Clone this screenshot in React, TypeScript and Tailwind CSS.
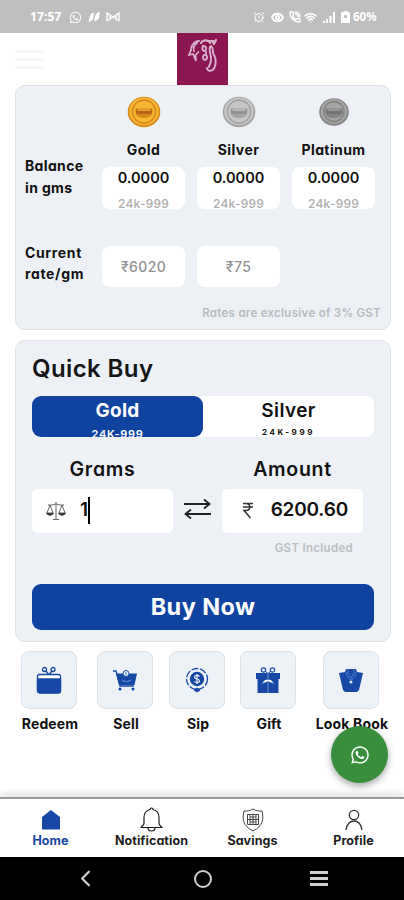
import { AlarmClock, ChevronLeft, Eye, PhoneCall, Wifi } from "lucide-react"
import { FaWhatsapp } from "react-icons/fa"
import type { ReactNode } from "react"

interface Metal {
  name: string
  balance: string
  rate?: string
  rim: string
  face: string
  mid: string
}

const metals: Metal[] = [
  { name: "Gold", balance: "0.0000", rate: "₹6020", rim: "#d98a1c", face: "#f7b733", mid: "#b8641a" },
  { name: "Silver", balance: "0.0000", rate: "₹75", rim: "#a3a3a3", face: "#c6c6c6", mid: "#929292" },
  { name: "Platinum", balance: "0.0000", rim: "#858585", face: "#a5a5a5", mid: "#737373" },
]

function Coin({ metal }: { metal: Metal }) {
  const r = metal.name === "Platinum" ? 14 : 15.5
  return (
    <svg className="h-8 w-[34px]" viewBox="0 0 34 32">
      <ellipse cx="17" cy="16" rx={r + 0.8} ry={r - 0.3} fill={metal.rim} />
      <ellipse cx="17" cy="15.4" rx={r - 0.8} ry={r - 1.6} fill={metal.face} />
      <circle cx="17" cy="15.6" r={r - 4} fill={metal.face} stroke={metal.rim} strokeWidth="1.6" />
      <path d="M8.5 12.5h17v4.5c-1 4-4.500 5-8.500 5s-7.500-1-8.500-5z" fill={metal.rim} />
      <rect x="9" y="13" width="16" height="5" rx="1" fill={metal.mid} />
      <path d="M10.500 14h13" stroke={metal.face} strokeWidth="1.400" />
    </svg>
  )
}

function Logo() {
  return (
    <div className="flex h-[52px] w-[51px] items-start justify-center bg-[#8c1650]">
      <svg className="mt-[5px] h-[35px] w-[34px]" viewBox="0 0 34 35" fill="none" stroke="#d9b3cb" strokeLinecap="round">
        <path d="M14 3c-4 0-8 4-8 9M12 5c-3 2-4 5-3 8" strokeWidth="1.900" strokeDasharray="2.500 1.600" />
        <path d="M6 12l-2 5 4-1 3 7-.5-6 3-3" strokeWidth="1.700" />
        <path d="M16 5c2-4 8-3 9 0M27 3l2 3M31 2l-2 4M23 3h7" strokeWidth="2.200" strokeDasharray="2 1.500" />
        <path d="M26 8c3 3 1 6 3 9 2 4 2 8 1 11-1 6-8 6-8 2M25 9c-1 5 1 7 1 12s-2 6-2 8" strokeWidth="2" strokeDasharray="3 1.400" />
        <path d="M18 8c4 0 4 4 1 5-2-1-2-3-1-5M19 17c4-1 4 4 1 5-2 0-3-3-1-5M21 14v2" strokeWidth="1.800" />
      </svg>
    </div>
  )
}

function StatusBar() {
  return (
    <div className="flex h-[33px] items-center bg-[#bfbfbf] pl-[30px] pt-px text-white">
      <span className="w-[39px] font-['Noto_Sans',sans-serif] text-xs font-bold tracking-[0.1px]">17:57</span>
      <FaWhatsapp size={13} />
      <svg className="ml-1.5 h-3 w-3" viewBox="0 0 12 12" fill="currentColor">
        <path d="M.5 11 2 5c1-3 3-4 4-3L5 8c-1 2-3 3-4.500 3zM6 10l1.500-6c1-2 3-3 4.500-3l-1 6c-1 2-3 3-5 3z" />
      </svg>
      <svg className="ml-1.5 h-3 w-3.5" viewBox="0 0 14 12" fill="none" stroke="currentColor" strokeWidth="1.300">
        <path d="M1 10V2l6 4 6-4v8M1 10l6-4 6 4M4 4v4M10 4v4" />
      </svg>
      <div className="ml-[133px] flex items-center">
        <AlarmClock size={12} />
        <Eye className="ml-[6px]" size={13} strokeWidth={3.6} />
        <PhoneCall className="ml-[5px]" size={12} strokeWidth={2.8} />
        <Wifi className="ml-[3px]" size={13} strokeWidth={3} />
        <svg className="ml-[5px] h-3 w-3.5" viewBox="0 0 14 12" fill="currentColor">
          <path d="M1 10h2v2H1zM4 8h2v4H4zM7.500 5h2v7h-2zM11 1h2v11h-2z" />
        </svg>
        <svg className="ml-[5px] h-3 w-[9px]" viewBox="0 0 9 14" preserveAspectRatio="none">
          <path d="M2.500 0h4v1.500H9V14H0V1.500h2.500z" fill="currentColor" />
          <path d="M3 5h3v3H3z" fill="#bfbfbf" />
        </svg>
      </div>
      <span className="ml-[3px] font-['Noto_Sans',sans-serif] text-[11.500px] font-bold">60%</span>
    </div>
  )
}

function BalanceCard() {
  return (
    <section className="h-[245px] w-[376px] rounded-[10px] border border-[#dfe2e5] bg-[#edf1f6] pl-[9px] pt-2.5">
      <div className="flex">
        <div className="w-[77px] pt-[59px] text-sm font-bold leading-[22px] tracking-[0.35px]">
          Balance
          <br />
          in gms
        </div>
        <div className="flex gap-3">
          {metals.map((m) => (
            <div key={m.name} className="flex w-[83px] flex-col items-center">
              <Coin metal={m} />
              <div className="mt-3 h-5 whitespace-nowrap text-sm font-bold leading-5 tracking-[0.4px]">{m.name}</div>
              <div className="mt-[7px] h-[42px] w-full rounded-lg bg-white text-center">
                <div className="text-[14.500px] font-semibold leading-[22px]">{m.balance}</div>
                <div className="mt-[5px] h-[15px] text-xs font-medium leading-[19px] tracking-[0.2px] text-[#aeaeae]">
                  24k-999
                </div>
              </div>
            </div>
          ))}
        </div>
      </div>
      <div className="mt-[33px] flex">
        <div className="w-[77px] whitespace-nowrap text-sm font-bold leading-[21px] tracking-[0.65px]">
          Current
          <br />
          rate/gm
        </div>
        <div className="flex gap-3 pt-1">
          {metals
            .filter((m) => m.rate)
            .map((m) => (
              <div
                key={m.name}
                className="flex h-[41px] w-[83px] items-center justify-center rounded-lg bg-white text-sm font-medium tracking-[0.4px] text-[#929292]"
              >
                {m.rate}
              </div>
            ))}
        </div>
      </div>
      <p className="mt-4 pr-[9px] text-right text-[11.500px] font-semibold leading-5 tracking-[0.280px] text-[#b9bbbe]">
        Rates are exclusive of 3% GST
      </p>
    </section>
  )
}

function ScaleIcon() {
  return (
    <svg className="h-5 w-5" viewBox="0 0 20 20" fill="none" stroke="#555" strokeWidth="0.900">
      <path d="M10 1v17M7 18.500h6M2 4h4l4-1 4 1h4M4 4 1 12M4 4l3 8M16 4l-3 8M16 4l3 8" />
      <path d="M0.500 12h7c-.5 3-6.500 3-7 0zM12.500 12h7c-.5 3-6.500 3-7 0z" fill="#222" />
    </svg>
  )
}

function QuickBuy() {
  return (
    <section className="mt-2.5 h-[302px] w-[376px] rounded-[10px] border border-[#dfe2e5] bg-[#edf1f6] px-4 pt-3">
      <h2 className="h-8 text-[24px] font-semibold leading-8 tracking-[0.4px] text-[#161616]">Quick Buy</h2>
      <div className="mt-[11px] flex h-[41px] w-[342px] rounded-lg bg-white text-center">
        <div className="w-[171px] overflow-hidden rounded-[9px] bg-[#10439f] text-white">
          <div className="text-[19px] font-bold leading-[29px] tracking-[0.3px]">Gold</div>
          <div className="mt-px text-[11px] font-semibold leading-4 tracking-[0.700px]">24K-999</div>
        </div>
        <div className="w-[171px]">
          <div className="text-[19px] font-semibold leading-[29px] tracking-[0.4px]">Silver</div>
          <div className="text-[8px] font-bold leading-[14px] tracking-[2.600px]">24K-999</div>
        </div>
      </div>
      <div className="mt-[18px] flex text-center text-[19.500px] font-semibold leading-7">
        <div className="w-[141px] tracking-[0.700px]">Grams</div>
        <div className="ml-[49px] w-[141px] tracking-[0.700px]">Amount</div>
      </div>
      <div className="mt-[6px] flex items-center">
        <div className="flex h-[44px] w-[141px] items-center rounded-md bg-white pb-px pl-[14px]">
          <ScaleIcon />
          <span className="ml-[14px] text-[19px] font-semibold">1</span>
          <span className="h-[27px] w-[1.500px] bg-black" />
        </div>
        <svg className="mx-[11px] -mt-[5px] h-6 w-[27px]" viewBox="0 0 27 24" fill="none" stroke="#222" strokeWidth="1.800">
          <path d="M0 7h25M20 2.500l5.500 4.500-5.500 4.500" />
          <path d="M27 17H2M7 12.500L1.500 17 7 21.500" />
        </svg>
        <div className="flex h-[44px] w-[141px] items-center rounded-md bg-white pb-px pl-5 pr-[15px]">
          <svg className="h-[17px] w-3" viewBox="0 0 12 17" fill="none" stroke="#333" strokeWidth="1.500">
            <path d="M1 1.500h10M1 5h10M1 1.500h3c5 0 5 7 0 7H2l6.500 7.500" />
          </svg>
          <span className="ml-auto text-[19px] font-semibold tracking-[-0.200px]">6200.60</span>
        </div>
      </div>
      <p className="mt-[5px] pr-[10px] text-right text-[11.500px] font-semibold leading-5 tracking-[0.300px] text-[#bbbdc0]">
        <span className="pr-[11px]">GST Included</span>
      </p>
      <button className="mt-[26px] h-[46px] w-[342px] rounded-[9px] bg-[#10439f] text-[23.500px] font-bold tracking-[0.400px] text-white">
        Buy Now
      </button>
    </section>
  )
}

function RedeemIcon() {
  return (
    <svg className="h-7 w-[26px]" viewBox="0 0 26 28" fill="none" stroke="#1748a5" strokeWidth="1.300">
      <circle cx="8.500" cy="3.500" r="2" />
      <circle cx="17" cy="3.500" r="2" />
      <path d="M10 5l3 4 3-4M13 9l-3 1M13 9l3 1" />
      <rect x="1.500" y="8.500" width="23" height="18" rx="2" fill="#fff" />
      <path d="M1.500 13h23V25a2 2 0 0 1-2 2h-19a2 2 0 0 1-2-2z" fill="#1748a5" />
    </svg>
  )
}

function SellIcon() {
  return (
    <svg className="h-[22px] w-[26px]" viewBox="0 0 26 22" fill="#1748a5">
      <path d="M1 2h3l4 15h14" fill="none" stroke="#1748a5" strokeWidth="1.300" />
      <path d="M4 4.500h21L22.500 16H7z" />
      <circle cx="14" cy="4.500" r="3" fill="#eaf0f7" stroke="#1748a5" />
      <path d="M14 3v3M10 11c3 2 6 2 9 0" stroke="#5f8ad0" strokeWidth="1.200" fill="none" />
      <circle cx="8" cy="20" r="1.500" />
      <circle cx="21" cy="20" r="1.500" />
    </svg>
  )
}

function SipIcon() {
  return (
    <svg className="h-[26px] w-6" viewBox="0 0 24 26" fill="none" stroke="#1748a5">
      <circle cx="12" cy="12" r="10.500" strokeWidth="1.300" strokeDasharray="7 1.700" />
      <circle cx="12" cy="12" r="6.500" strokeWidth="1.400" fill="#1748a5" />
      <path d="M14.500 9.500c-2-2-5-1-5 .7 0 2.300 5 1.300 5 3.500s-3 2.300-5 .8M12 7v10" stroke="#eef3fa" strokeWidth="1.200" />
      <path d="M9 23l3-2 3 2-3 2z" fill="#1748a5" />
    </svg>
  )
}

function GiftIcon() {
  return (
    <svg className="h-[26px] w-6" viewBox="0 0 24 26" fill="#1748a5">
      <circle cx="7.500" cy="3" r="2.200" fill="none" stroke="#1748a5" strokeWidth="1.200" />
      <circle cx="16.500" cy="3" r="2.200" fill="none" stroke="#1748a5" strokeWidth="1.200" />
      <path d="M9 4l3 2.500L15 4" fill="none" stroke="#1748a5" />
      <path d="M0 6h24v6H0zM1.500 11.500h21V26h-21z" />
      <path d="M12 6v20" stroke="#7095cf" />
      <path d="M6 17c2-4 4-5 6-4 2-1 4 0 6 4-3-2-5-2-6-3-1 1-3 1-6 3z" fill="#fff" />
    </svg>
  )
}

function LookBookIcon() {
  return (
    <svg className="h-[23px] w-6" viewBox="0 0 24 23" fill="#1748a5">
      <path d="M7 0h10l1 3 6 1-4 17-2 2H6l-2-2L0 4l6-1z" />
      <path d="M7 3c0 4 2 6 5 8 3-2 5-4 5-8M9 0v4l3 5 3-5V0" fill="none" stroke="#5f8ad6" strokeWidth=".8" />
      <circle cx="12" cy="13" r="1.500" fill="#dce8f8" />
    </svg>
  )
}

function Action({ label, className, children }: { label: string; className: string; children: ReactNode }) {
  return (
    <div className={className}>
      <div className="flex h-[58px] w-[56px] items-center justify-center rounded-lg border border-[#dde1e6] bg-[#edf2f7]">
        {children}
      </div>
      <div className="mt-1 flex w-[58px] justify-center whitespace-nowrap text-sm font-bold leading-[22px] tracking-[0.150px]">
        {label}
      </div>
    </div>
  )
}

function NavItem({ label, active, children }: { label: string; active?: boolean; children: ReactNode }) {
  return (
    <div className={active ? "flex w-[101px] flex-col items-center text-[#17469f]" : "flex w-[101px] flex-col items-center text-[#1d1d1d]"}>
      <div className="flex h-[25px] items-center">{children}</div>
      <div className="text-[12.500px] font-bold leading-[18px] tracking-[0.080px]">{label}</div>
    </div>
  )
}

export default function App() {
  return (
    <div className="relative flex h-[900px] w-[404px] flex-col overflow-hidden bg-white font-['Inter',sans-serif] text-[#111] [font-feature-settings:'cv11']">
      <StatusBar />
      <header className="relative flex h-[52px] justify-center">
        <div className="absolute left-[15px] top-[17px] flex flex-col gap-[5px]">
          <span className="h-[3px] w-7 bg-[#f5f7f7]" />
          <span className="h-[3px] w-7 bg-[#f5f7f7]" />
          <span className="h-[3px] w-7 bg-[#f5f7f7]" />
        </div>
        <Logo />
      </header>

      <main className="h-[712px] pl-[15px]">
        <BalanceCard />
        <QuickBuy />
        <div className="mt-[9px] flex pl-[6px]">
          <Action label="Redeem" className="w-[76px]">
            <RedeemIcon />
          </Action>
          <Action label="Sell" className="w-[72px]">
            <SellIcon />
          </Action>
          <Action label="Sip" className="w-[71px]">
            <SipIcon />
          </Action>
          <Action label="Gift" className="w-[83px]">
            <GiftIcon />
          </Action>
          <Action label="Look Book" className="w-[56px]">
            <LookBookIcon />
          </Action>
        </div>
      </main>

      <button className="absolute left-[331px] top-[726px] flex h-[57px] w-[57px] items-center justify-center rounded-full bg-[#388e3c] text-white shadow-[0_3px_7px_rgba(0,0,0,0.35)]">
        <FaWhatsapp size={20} />
      </button>

      <div className="h-[2px] bg-[#9b9b9b] shadow-[0_-2px_6px_rgba(0,0,0,0.35)]" />
      <nav className="flex h-[58px] bg-white pt-2">
        <NavItem label="Home" active>
          <svg className="h-5 w-5" viewBox="0 0 20 20" fill="#1748a5">
            <path d="M10 0l9 7v12.500H1V7z" />
          </svg>
        </NavItem>
        <NavItem label="Notification">
          <svg className="h-[25px] w-[23px]" viewBox="0 0 23 25" fill="none" stroke="currentColor" strokeWidth="1.200">
            <path d="M10 2.500c0-2 3-2 3 0 4 1 6 4 6 8v6c0 2 3 3 3 4H1c0-1 3-2 3-4v-6c0-4 2-7 6-8zM8 21c0 4 7 4 7 0" />
          </svg>
        </NavItem>
        <NavItem label="Savings">
          <svg className="h-6 w-[22px]" viewBox="0 0 22 24" fill="none" stroke="#444" strokeWidth="1">
            <path d="M11 1c3 2 6 2 9 2 2 8 1 15-9 20C1 18 0 11 2 3c3 0 6 0 9-2z" />
            <path d="M5.500 6.500h11v10h-11zM8 7v9M11 7v9M14 7v9M6 11.500h10M8 9h6M8 14h6" />
          </svg>
        </NavItem>
        <NavItem label="Profile">
          <svg className="h-[22px] w-[18px]" viewBox="0 0 18 22" fill="none" stroke="#333" strokeWidth="1.300">
            <circle cx="9" cy="6" r="4.700" />
            <path d="M1 21c1-12 15-12 16 0" />
          </svg>
        </NavItem>
      </nav>
      <div className="relative flex h-[43px] items-center bg-black text-[#cfcfcf]">
        <ChevronLeft className="ml-[72px]" size={27} strokeWidth={2} />
        <span className="ml-[95px] h-[18px] w-[18px] rounded-full border-2 border-[#cfcfcf]" />
        <div className="ml-[98px] flex flex-col gap-[3px]">
          <span className="h-[3px] w-[18px] bg-[#cfcfcf]" />
          <span className="h-[3px] w-[18px] bg-[#cfcfcf]" />
          <span className="h-[3px] w-[18px] bg-[#cfcfcf]" />
        </div>
      </div>
    </div>
  )
}
